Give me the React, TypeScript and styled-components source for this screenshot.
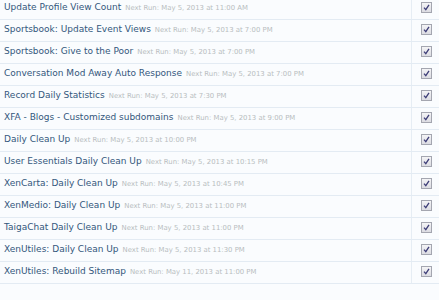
import styled, { createGlobalStyle } from "styled-components";

const GlobalStyle = createGlobalStyle`
    html, body {
        margin: 0;
        padding: 0;
        background: #fafcfe;
        overflow: hidden;
    }
`;

const Page = styled.div`
    width: 439px;
    height: 300px;
    overflow: hidden;
    background: #fafcfe;
    font-family: "DejaVu Sans", Verdana, sans-serif;
`;

const List = styled.ul`
    list-style: none;
    margin: -2px 0 0 0;
    padding: 0;
`;

const Row = styled.li`
    display: grid;
    grid-template-columns: 412px 1fr;
    height: 21px;
    border-bottom: 1px solid #e3ebf3;
`;

const Info = styled.div`
    display: flex;
    align-items: center;
    gap: 4px;
    padding-left: 4px;
    padding-bottom: 3px;
    border-right: 1px solid #e6edf4;
    white-space: nowrap;
    overflow: hidden;
`;

const Title = styled.span`
    font-size: 9px;
    color: #33577c;
`;

const NextRun = styled.span`
    font-size: 6.9px;
    color: #b8bcc0;
    padding-top: 1px;
`;

const Toggle = styled.div`
    display: flex;
    align-items: center;
    justify-content: center;
    padding-left: 1px;
    padding-bottom: 3px;
`;

const Box = styled.span`
    display: flex;
    align-items: center;
    justify-content: center;
    width: 9px;
    height: 9px;
    border: 1px solid #a4a6b0;
    background: linear-gradient(#f4f4f6, #dcdce2);
`;

type Task = { title: string; next: string };

const tasks: Task[] = [
    { title: "Update Profile View Count", next: "May 5, 2013 at 11:00 AM" },
    { title: "Sportsbook: Update Event Views", next: "May 5, 2013 at 7:00 PM" },
    { title: "Sportsbook: Give to the Poor", next: "May 5, 2013 at 7:00 PM" },
    { title: "Conversation Mod Away Auto Response", next: "May 5, 2013 at 7:00 PM" },
    { title: "Record Daily Statistics", next: "May 5, 2013 at 7:30 PM" },
    { title: "XFA - Blogs - Customized subdomains", next: "May 5, 2013 at 9:00 PM" },
    { title: "Daily Clean Up", next: "May 5, 2013 at 10:00 PM" },
    { title: "User Essentials Daily Clean Up", next: "May 5, 2013 at 10:15 PM" },
    { title: "XenCarta: Daily Clean Up", next: "May 5, 2013 at 10:45 PM" },
    { title: "XenMedio: Daily Clean Up", next: "May 5, 2013 at 11:00 PM" },
    { title: "TaigaChat Daily Clean Up", next: "May 5, 2013 at 11:00 PM" },
    { title: "XenUtiles: Daily Clean Up", next: "May 5, 2013 at 11:30 PM" },
    { title: "XenUtiles: Rebuild Sitemap", next: "May 11, 2013 at 11:00 PM" },
];

function Check() {
    return (
        <Box>
            <svg width="7" height="7" viewBox="0 0 7 7">
                <path d="M1 3.6 L2.8 5.6 L6 0.8" fill="none" stroke="#3e3e78" strokeWidth="1.3" />
            </svg>
        </Box>
    );
}

export default function App() {
    return (
        <Page>
            <GlobalStyle />
            <List>
                {tasks.map((t) => (
                    <Row key={t.title}>
                        <Info>
                            <Title>{t.title}</Title>
                            <NextRun>Next Run: {t.next}</NextRun>
                        </Info>
                        <Toggle>
                            <Check />
                        </Toggle>
                    </Row>
                ))}
            </List>
        </Page>
    );
}
